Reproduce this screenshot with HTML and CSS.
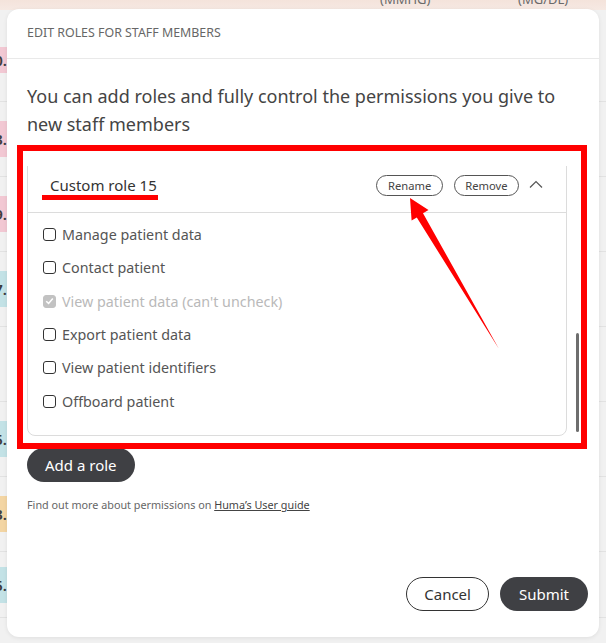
FILE: index.html
```html
<!DOCTYPE html>
<html>
<head>
<meta charset="utf-8">
<link rel="stylesheet" href="styles.css">
</head>
<body>
<div class="page">
  <div class="bg-head">
    <div class="bg-labels"><span class="bg-col c1">(MMHG)</span><span class="bg-col c2">(MG/DL)</span></div>
  </div>
  <div class="bg-rows">
    <div class="bg-row first"><span class="cell pink short">0.</span></div>
    <div class="bg-row"><span class="cell pink">3.</span></div>
    <div class="bg-row"><span class="cell pink">9.</span></div>
    <div class="bg-row"><span class="cell cyan">7.</span></div>
    <div class="bg-row"></div>
    <div class="bg-row"><span class="cell cyan">5.</span></div>
    <div class="bg-row"><span class="cell orange">3.</span></div>
    <div class="bg-row last"><span class="cell cyan">5.</span></div>
  </div>
</div>

<div class="modal">
  <div class="modal-head">EDIT ROLES FOR STAFF MEMBERS</div>
  <div class="modal-body">
    <p class="desc">You can add roles and fully control the permissions you give to new staff members</p>
    <div class="roles">
      <div class="roles-scroll">
        <div class="role-card">
          <div class="role-head">
            <span class="role-name">Custom role 14</span>
          </div>
        </div>
        <div class="role-card">
          <div class="role-head">
            <span class="role-name">Custom role 15</span>
            <div class="role-actions">
              <button class="pill">Rename</button>
              <button class="pill">Remove</button>
              <svg class="chevron" width="14" height="8" viewBox="0 0 14 8"><path d="M1 7.5 L7 1.5 L13 7.5" fill="none" stroke="#555" stroke-width="1.2"/></svg>
            </div>
          </div>
          <ul class="perms">
            <li><span class="cb"></span>Manage patient data</li>
            <li><span class="cb"></span>Contact patient</li>
            <li class="disabled"><span class="cb checked"><svg width="9" height="8" viewBox="0 0 9 8"><path d="M1.2 4.2 L3.6 6.4 L7.8 1.6" fill="none" stroke="#fff" stroke-width="1.5"/></svg></span>View patient data (can't uncheck)</li>
            <li><span class="cb"></span>Export patient data</li>
            <li><span class="cb"></span>View patient identifiers</li>
            <li><span class="cb"></span>Offboard patient</li>
          </ul>
        </div>
      </div>
      <div class="scrollbar"><div class="thumb"></div></div>
    </div>
    <button class="btn btn-dark add">Add a role</button>
    <p class="help">Find out more about permissions on <a class="link">Huma’s User guide</a></p>
  </div>
  <div class="modal-foot">
    <button class="btn btn-outline">Cancel</button>
    <button class="btn btn-dark">Submit</button>
  </div>
</div>

<div class="anno-rect"></div>
<div class="anno-line"></div>
<svg class="anno-arrow" width="606" height="643" viewBox="0 0 606 643">
  <polygon points="410,198 428.5,210 423,213.2 499,349 416.8,217.5 411.6,220.5" fill="#ff0000"/>
</svg>
</body>
</html>
```

FILE: styles.css
```css
* { box-sizing: border-box; }

html, body {
  margin: 0;
  padding: 0;
  overflow: hidden;
}

body {
  width: 606px;
  height: 643px;
  position: relative;
  background: #f1f1f1;
  font-family: "Noto Sans", "Open Sans", sans-serif;
  color: #444;
}

/* background page (dimmed table) */
.page {
  width: 606px;
  height: 643px;
  overflow: hidden;
}

.bg-head {
  height: 10px;
  background: linear-gradient(#f4e3db, #f6e9e3);
  overflow: hidden;
}

.bg-labels {
  display: flex;
  padding-left: 380px;
  margin-top: -8px;
  font-size: 13px;
  line-height: 14px;
  color: #6a6a6a;
}

.bg-col.c1 { width: 138px; }

.bg-rows {
  display: flex;
  flex-direction: column;
}

.bg-row {
  height: 75px;
  border-bottom: 1px solid #e2e2e2;
  display: flex;
  align-items: center;
}

.bg-row.first {
  height: 92px;
  align-items: flex-start;
  padding-top: 37px;
}

.bg-row.last { height: 66px; }

.cell {
  width: 7px;
  height: 36px;
  display: flex;
  justify-content: flex-end;
  align-items: center;
  overflow: hidden;
  white-space: nowrap;
  font-size: 15px;
  font-weight: 600;
  color: #3c3c3c;
}

.cell.short { height: 26px; }
.pink { background: #f2c8d3; }
.cyan { background: #c3e2e6; }
.orange { background: #f3d5a3; }

/* modal */
.modal {
  position: absolute;
  left: 7px;
  top: 9px;
  width: 592px;
  height: 628px;
  background: #fff;
  border-radius: 12px;
  box-shadow: 0 1px 4px rgba(0,0,0,0.08);
  display: flex;
  flex-direction: column;
}

.modal-head {
  height: 50px;
  padding: 0 20px;
  line-height: 48px;
  font-size: 12.4px;
  color: #666;
  border-bottom: 1px solid #e9e9e9;
}

.modal-body {
  padding: 0 19px 0 20px;
}

.desc {
  margin: 23px 0 28px;
  font-size: 18px;
  line-height: 28px;
  color: #444;
}

.roles {
  position: relative;
  height: 270px;
  width: 553px;
}

.roles-scroll {
  height: 270px;
  width: 540px;
  overflow: hidden;
  display: flex;
  flex-direction: column;
  justify-content: flex-end;
  gap: 12px;
}

.role-card {
  flex: none;
  border: 1px solid #dcdcdc;
  border-radius: 8px;
}

.role-head {
  height: 54px;
  padding: 0 23px 0 22px;
  display: flex;
  align-items: center;
  justify-content: space-between;
  border-bottom: 1px solid #dcdcdc;
}

.role-card:first-child .role-head { border-bottom: none; }

.role-name {
  font-size: 15px;
  color: #333;
}

.role-actions {
  display: flex;
  align-items: center;
  gap: 11px;
}

.pill {
  height: 21px;
  padding: 0 10.5px;
  border: 1px solid #555;
  border-radius: 11px;
  background: #fff;
  font-family: inherit;
  font-size: 11.2px;
  line-height: 19px;
  color: #444;
}

.chevron {
  margin-left: -1px;
  margin-top: -3px;
}

.perms {
  list-style: none;
  margin: 0;
  padding: 5px 0 17px 15px;
}

.perms li {
  height: 33.4px;
  display: flex;
  align-items: center;
  font-size: 14.3px;
  color: #555;
}

.cb {
  width: 13px;
  height: 13px;
  margin-right: 6px;
  border: 1.3px solid #333;
  border-radius: 3px;
  display: flex;
  align-items: center;
  justify-content: center;
}

.cb.checked {
  background: #c2c2c2;
  border-color: #c2c2c2;
}

.perms li.disabled { color: #b9b9b9; }

.scrollbar {
  position: absolute;
  right: 1px;
  top: 0;
  width: 3px;
  height: 270px;
}

.thumb {
  margin-top: 167px;
  height: 99px;
  width: 3px;
  border-radius: 2px;
  background: #6e6e6e;
}

.btn {
  height: 34px;
  border-radius: 17px;
  font-family: inherit;
  font-size: 15px;
  padding: 0 19px;
  cursor: pointer;
}

.btn-dark {
  background: #3f4044;
  color: #fff;
  border: none;
}

.btn-outline {
  background: #fff;
  color: #333;
  border: 1px solid #333;
  padding: 0 17px;
}

.add {
  margin-top: 12px;
  height: 34px;
  padding: 0 18px;
}

.help {
  margin: 15px 0 0;
  font-size: 10.8px;
  line-height: 16px;
  color: #666;
}

.link {
  color: #444;
  text-decoration: underline;
}

.modal-foot {
  margin-top: auto;
  padding: 0 11px 26px;
  display: flex;
  justify-content: flex-end;
  gap: 11px;
}

/* annotations */
.anno-rect {
  position: absolute;
  left: 17px;
  top: 145px;
  width: 570px;
  height: 304px;
  border: 6.5px solid #ff0000;
}

.anno-line {
  position: absolute;
  left: 42px;
  top: 195px;
  width: 116px;
  height: 5px;
  background: #ff0000;
}

.anno-arrow {
  position: absolute;
  left: 0;
  top: 0;
}
```
